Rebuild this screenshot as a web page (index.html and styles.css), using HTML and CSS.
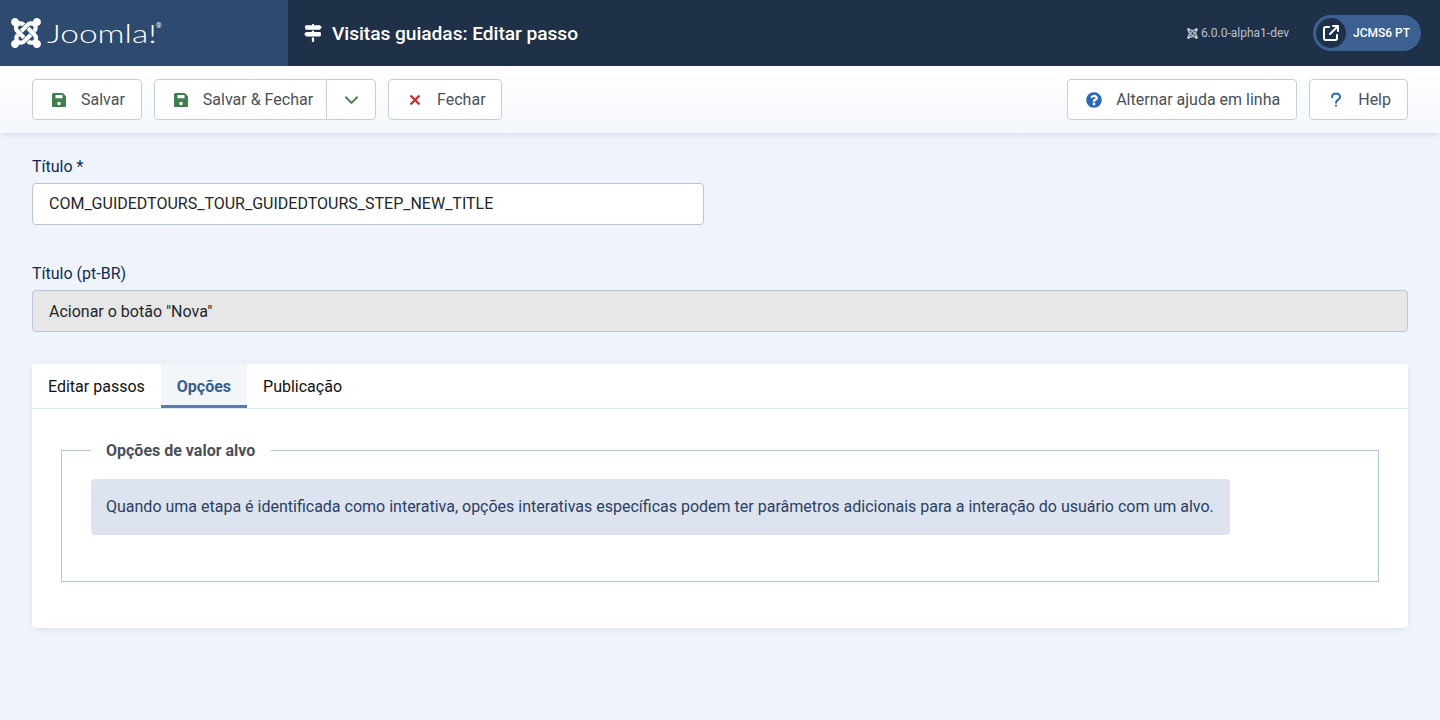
FILE: index.html
```html
<!DOCTYPE html>
<html lang="pt-BR">
<head>
<meta charset="utf-8">
<title>Visitas guiadas: Editar passo</title>
<link rel="stylesheet" href="styles.css">
</head>
<body>
<svg class="defs" width="0" height="0">
  <symbol id="i-joomla" viewBox="0 32 448 448">
    <g id="joomla-half">
      <path d="M.6 92.1C.6 58.8 27.4 32 60.4 32c30 0 54.5 21.9 59.2 50.2 32.6-7.6 67.1.6 96.5 30l-44.3 44.3c-20.5-20.5-42.6-16.3-55.4-3.5-14.3 14.3-14.3 37.9 0 52.2l99.5 99.5-44 44.3c-87.7-87.2-49.7-49.7-99.8-99.7-26.8-26.5-35-64.8-24.8-98.9C20.4 144.6.6 120.7.6 92.1z"/>
      <path d="M130.1 208.5l44.3 44.3c10-10 89.7-89.7 99.7-99.8 14.3-14.3 37.6-14.3 51.9 0 12.8 12.8 17 35-3.5 55.4l44 44.3c31.2-31.2 38.5-67.6 28.9-101.2 29.2-4.1 51.9-29.2 51.9-59.5 0-33.2-26.8-60.1-59.8-60.1-30.3 0-55.4 22.5-59.5 51.6-33.8-9.9-71.7-1.5-98.3 25.1-18.3 19.1-71.1 71.5-99.6 99.9z"/>
    </g>
    <use href="#joomla-half" transform="rotate(180 224 256)"/>
  </symbol>
  <symbol id="i-save" viewBox="0 0 16 16">
    <path fill-rule="evenodd" d="M2.6 1h8.6c.4 0 .8.2 1.1.5l2.2 2.2c.3.3.5.7.5 1.1v8.6c0 .9-.7 1.6-1.6 1.6H2.6c-.9 0-1.6-.7-1.6-1.6V2.6C1 1.700 1.700 1 2.600 1zM4.500 3v3.200h7V3zM8 9.700a1.800 1.800 0 1 0 0 3.600 1.800 1.800 0 0 0 0-3.600z"/>
  </symbol>
</svg>

<header class="topbar">
  <div class="brand">
    <svg class="brand-mark"><use href="#i-joomla"/></svg>
    <span class="brand-name">Joomla!</span>
    <span class="brand-reg">®</span>
  </div>
  <div class="page-head">
    <svg class="page-icon" viewBox="0 0 512 512"><path d="M224 32H64C46.3 32 32 46.3 32 64v64c0 17.7 14.3 32 32 32H441.4c4.2 0 8.3-1.7 11.3-4.7l48-48c6.2-6.2 6.2-16.4 0-22.6l-48-48c-3-3-7.1-4.7-11.3-4.7H288c0-17.7-14.3-32-32-32s-32 14.3-32 32zM480 256c0-17.7-14.3-32-32-32H288V192H224v32H70.6c-4.2 0-8.3 1.7-11.3 4.7l-48 48c-6.2 6.2-6.2 16.4 0 22.6l48 48c3 3 7.1 4.7 11.3 4.7H448c17.7 0 32-14.3 32-32V256zM288 480V384H224v96c0 17.7 14.3 32 32 32s32-14.3 32-32z"/></svg>
    <h1 class="page-title">Visitas guiadas: Editar passo</h1>
  </div>
  <div class="head-right">
    <span class="version"><svg class="version-mark"><use href="#i-joomla"/></svg>6.0.0-alpha1-dev</span>
    <a class="site-pill" href="#">
      <span class="site-icon"><svg viewBox="0 0 512 512"><path d="M320 0c-17.7 0-32 14.3-32 32s14.3 32 32 32h82.7L201.4 265.4c-12.5 12.5-12.5 32.8 0 45.3s32.8 12.5 45.3 0L448 109.3V192c0 17.7 14.3 32 32 32s32-14.3 32-32V32c0-17.7-14.3-32-32-32H320zM80 32C35.8 32 0 67.8 0 112V432c0 44.2 35.8 80 80 80H400c44.2 0 80-35.8 80-80V320c0-17.7-14.3-32-32-32s-32 14.3-32 32V432c0 8.8-7.2 16-16 16H80c-8.8 0-16-7.2-16-16V112c0-8.8 7.2-16 16-16H192c17.7 0 32-14.3 32-32s-14.3-32-32-32H80z"/></svg></span>
      <span class="site-name">JCMS6 PT</span>
    </a>
  </div>
</header>

<nav class="toolbar">
  <button class="btn" type="button"><svg class="ico ico-green"><use href="#i-save"/></svg>Salvar</button>
  <div class="btn-group">
    <button class="btn" type="button"><svg class="ico ico-green"><use href="#i-save"/></svg>Salvar &amp; Fechar</button>
    <button class="btn btn-caret" type="button" aria-label="Mais"><svg class="caret" viewBox="0 0 16 10"><path d="M1.500 1.500 8 8l6.500-6.500"/></svg></button>
  </div>
  <button class="btn btn-close" type="button"><svg class="ico ico-red" viewBox="0 0 12 16"><path d="M1.500 3.500 10.500 12.500M10.500 3.500 1.500 12.500"/></svg>Fechar</button>
  <div class="toolbar-right">
    <button class="btn" type="button"><svg class="ico ico-blue" viewBox="0 0 512 512"><path d="M504 256c0 136.997-111.043 248-248 248S8 392.997 8 256C8 119.083 119.043 8 256 8s248 111.083 248 248zM262.655 90c-54.497 0-89.255 22.957-116.549 63.758-3.536 5.286-2.353 12.415 2.715 16.258l34.699 26.31c5.205 3.947 12.621 3.008 16.665-2.122 17.864-22.658 30.113-35.797 57.303-35.797 20.429 0 45.698 13.148 45.698 32.958 0 14.976-12.363 22.667-32.534 33.976C247.128 238.528 216 254.941 216 296v4c0 6.627 5.373 12 12 12h56c6.627 0 12-5.373 12-12v-1.333c0-28.462 83.186-29.647 83.186-106.667 0-58.002-60.165-102-116.531-102zM256 338c-25.365 0-46 20.635-46 46 0 25.364 20.635 46 46 46s46-20.636 46-46c0-25.365-20.635-46-46-46z"/></svg>Alternar ajuda em linha</button>
    <button class="btn" type="button"><svg class="ico ico-question" viewBox="0 0 12 16"><path d="M2 5.200C2 2.700 3.800 1.400 6 1.400S10 2.800 10 4.900C10 7.600 6 7.700 6 10.800"/><path d="M6 13.500v.2"/></svg>Help</button>
  </div>
</nav>

<main class="content">
  <div class="field field-title">
    <label class="field-label" for="title">Título *</label>
    <input class="field-input" id="title" type="text" value="COM_GUIDEDTOURS_TOUR_GUIDEDTOURS_STEP_NEW_TITLE">
  </div>
  <div class="field">
    <label class="field-label" for="title-tr">Título (pt-BR)</label>
    <input class="field-input field-readonly" id="title-tr" type="text" readonly value="Acionar o botão &quot;Nova&quot;">
  </div>

  <section class="tabs">
    <div class="tab-list">
      <button class="tab" type="button">Editar passos</button>
      <button class="tab tab-active" type="button">Opções</button>
      <button class="tab" type="button">Publicação</button>
    </div>
    <div class="tab-panel">
      <fieldset class="options">
        <legend class="options-legend">Opções de valor alvo</legend>
        <div class="alert">Quando uma etapa é identificada como interativa, opções interativas específicas podem ter parâmetros adicionais para a interação do usuário com um alvo.</div>
      </fieldset>
    </div>
  </section>
</main>
</body>
</html>
```

FILE: styles.css
```css
* { box-sizing: border-box; }
body { margin: 0; min-height: 720px; background: #eff4fc; color: #22262a; font-family: Roboto, "Liberation Sans", sans-serif; font-size: 16px; line-height: 1.5; }
.defs { position: absolute; }
svg { fill: currentColor; display: block; }

/* top bar */
.topbar { display: flex; height: 66px; background: #1f3049; color: #fff; }
.brand { display: flex; align-items: center; width: 288px; padding-left: 11px; background: #2e4a6e; }
.brand-mark { width: 30px; height: 30px; }
.brand-name { margin-left: 6px; width: 108px; font-family: Lato, sans-serif; font-weight: 300; font-size: 25px; line-height: 1; transform: scaleX(1.34); transform-origin: left center; }
.brand-reg { align-self: flex-start; margin: 23px 0 0 1px; font-size: 7px; line-height: 1; }
.page-head { display: flex; align-items: center; padding-left: 16px; }
.page-icon { width: 18px; height: 18px; margin-right: 10px; }
.page-title { margin: 2px 0 0; font-size: 19.2px; font-weight: 500; line-height: 1; letter-spacing: -0.05px; }
.head-right { display: flex; align-items: center; margin-left: auto; padding-right: 19px; }
.version { display: flex; align-items: center; font-size: 12px; color: #b9c2ce; margin-right: 24px; }
.version-mark { width: 11px; height: 11px; margin-right: 3px; }
.site-pill { display: flex; align-items: center; height: 36px; width: 108px; padding-left: 3px; border-radius: 18px; background: #3c6090; color: #fff; text-decoration: none; }
.site-icon { display: flex; align-items: center; justify-content: center; width: 30px; height: 30px; border-radius: 50%; background: #1f3049; }
.site-icon svg { width: 16px; height: 16px; }
.site-name { margin-left: 7px; font-size: 12px; font-weight: 500; }

/* toolbar */
.toolbar { display: flex; gap: 12px; height: 67px; padding: 13px 32px; background: linear-gradient(#fff, #f4f7fc); box-shadow: 0 2px 6px rgba(60, 80, 120, 0.12); }
.toolbar-right { display: flex; gap: 12px; margin-left: auto; }
.btn { display: flex; align-items: center; height: 41px; padding: 0 16px 0 18px; background: #fff; border: 1px solid #c5cfdc; border-radius: 4px; color: #495057; font: inherit; }
.btn-group { display: flex; }
.btn-group .btn:first-child { border-radius: 4px 0 0 4px; padding-right: 13px; }
.btn-caret { justify-content: center; width: 50px; padding: 0; margin-left: -1px; border-radius: 0 4px 4px 0; color: #457d54; }
.btn-close { padding-right: 15px; }
.caret { width: 15px; height: 10px; fill: none; stroke: currentColor; stroke-width: 2; }
.ico { width: 16px; height: 16px; margin-right: 14px; flex: none; }
.ico-green { color: #3f7f4f; }
.ico-red { color: #c8302f; fill: none; stroke: currentColor; stroke-width: 2.4; }
.ico-blue { color: #2a69b8; }
.ico-question { color: #2a69b8; fill: none; stroke: currentColor; stroke-width: 2; stroke-linecap: round; }

/* form */
.content { padding: 22px 32px 0; }
.field { display: flex; flex-direction: column; }
.field-title { width: 672px; margin-bottom: 37px; }
.field-label { margin-bottom: 4px; color: #0f2a55; line-height: 24px; }
.field-input { height: 42px; padding: 0 16px; background: #fff; border: 1px solid #b9c6d8; border-radius: 4px; color: #22262a; font: inherit; }
.field-title .field-input { padding-bottom: 2px; }
.field-readonly { background: #e7e7e7; }

/* tabs */
.tabs { margin-top: 32px; background: #fff; border-radius: 4px; box-shadow: 0 2px 6px rgba(60, 80, 120, 0.1); }
.tab-list { display: flex; height: 45px; border-bottom: 1px solid #dfe8f2; }
.tab { height: 44px; padding: 2px 16px 0; background: none; border: 0; color: #111; font: inherit; }
.tab-active { padding-top: 4px; background: #f2f6fb; border-bottom: 3px solid #5d7ca5; color: #3b5c8f; font-weight: 700; }
.tab-panel { padding: 28px 29px 46px; }
.options { margin: 0; padding: 16px 29px 0; height: 145px; border: 1px solid #b2c4dc; }
.options-legend { padding: 2px 16px 0 15px; color: #495057; font-weight: 700; }
.alert { width: 1139px; padding: 16px 15px; background: #dde3ef; border-radius: 4px; color: #2a4165; }
```
